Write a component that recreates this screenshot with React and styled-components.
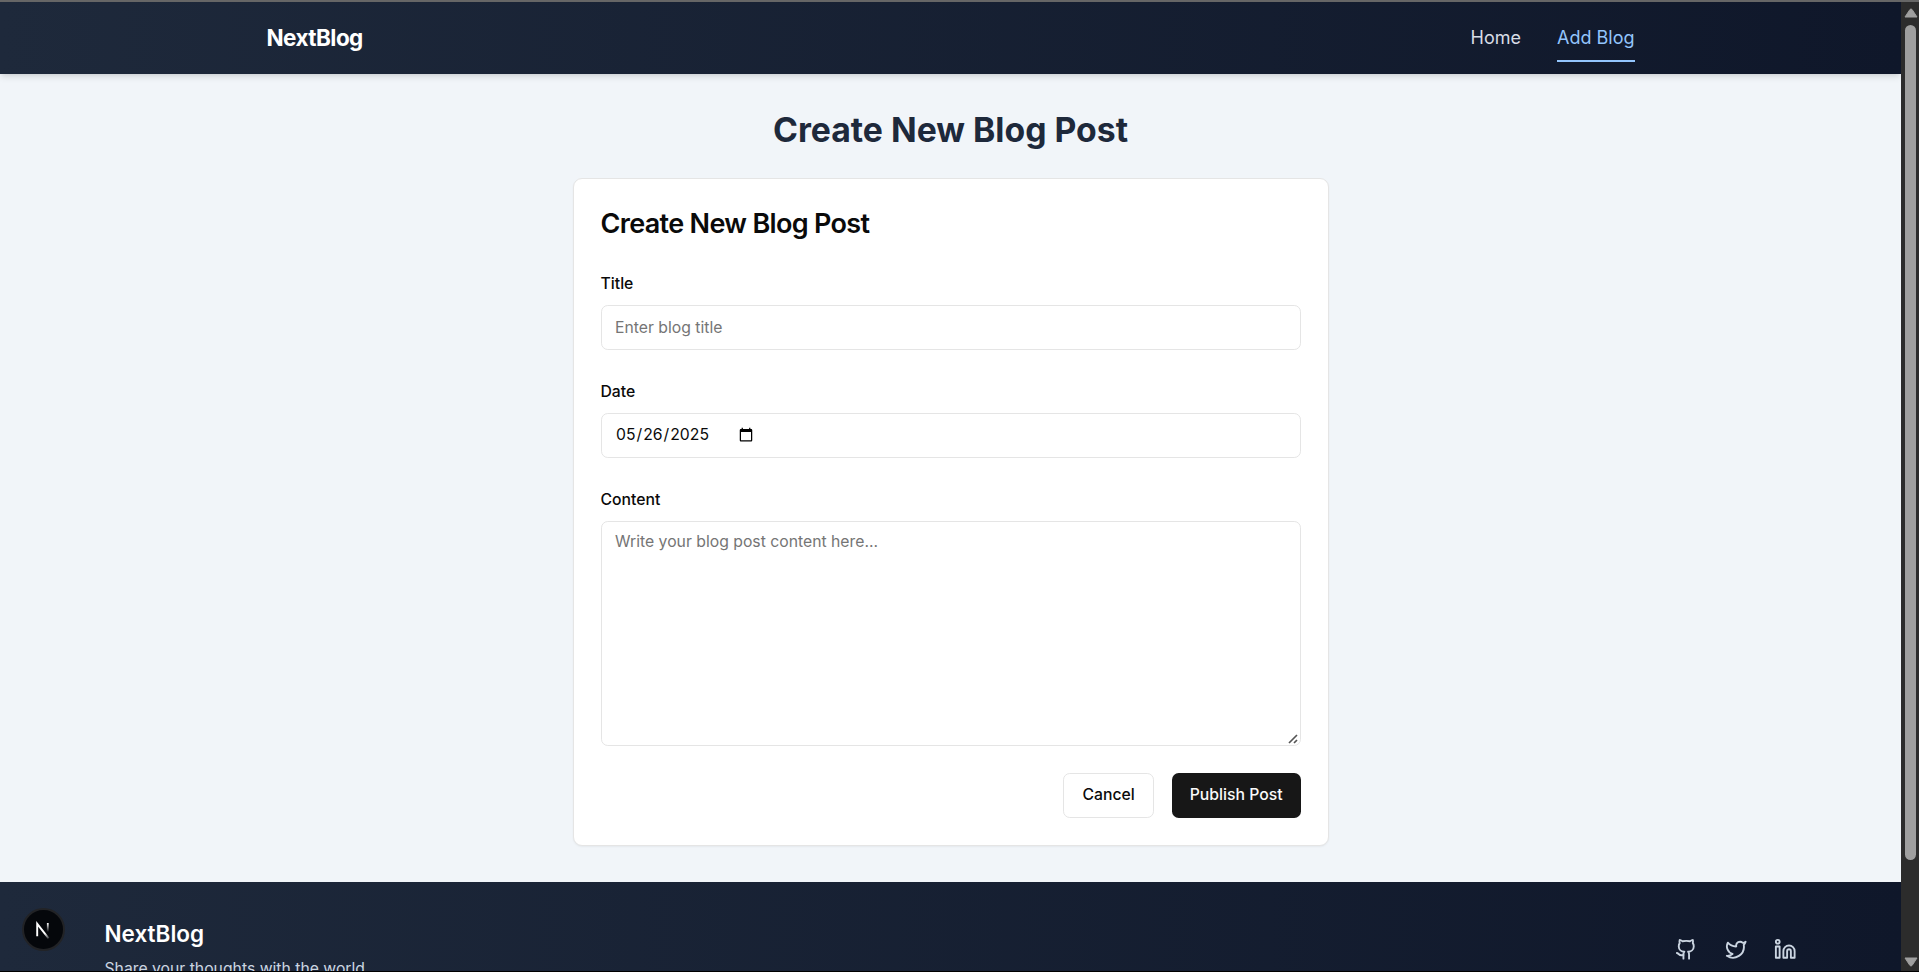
import React from "react";
import styled, { createGlobalStyle } from "styled-components";
import { Github, Twitter, Linkedin } from "lucide-react";

const GlobalStyle = createGlobalStyle`
  *, *::before, *::after { box-sizing: border-box; }
  body {
    margin: 0;
    overflow: hidden;
    font-family: Inter, "Liberation Sans", sans-serif;
    font-size: 18px;
    line-height: 27px;
    color: #0a0a0a;
  }
  h1, h2, p { margin: 0; }
`;

const Window = styled.div`
  display: flex;
  height: 972px;
  border-top: 2px solid #666;
  border-bottom: 1px solid #000;
  overflow: hidden;
`;

const Page = styled.div`
  position: relative;
  flex: 1;
  min-width: 0;
  overflow: hidden;
  background: #f1f5f9;
`;

const Header = styled.header`
  position: relative;
  height: 72px;
  background: linear-gradient(to right, #1e293b, #0f172a);
  box-shadow: 0 4.5px 6.75px -1px rgba(0, 0, 0, 0.1), 0 2.25px 4.5px -2px rgba(0, 0, 0, 0.1);
`;

const HeaderInner = styled.div`
  display: flex;
  align-items: center;
  justify-content: space-between;
  width: 1368px;
  height: 100%;
  margin: 0 auto;
`;

const Brand = styled.span`
  display: block;
  font-size: 22.5px;
  line-height: 31.5px;
  font-weight: ${(p) => (p.$tight ? 700 : 600)};
  letter-spacing: ${(p) => (p.$tight ? "-0.025em" : "normal")};
  color: #fff;
`;

const Nav = styled.nav`
  display: flex;
  gap: 36px;
`;

const NavLink = styled.a`
  padding: 9px 0;
  border-bottom: 2px solid ${(p) => (p.$active ? "#93c5fd" : "transparent")};
  color: ${(p) => (p.$active ? "#93c5fd" : "#d8dde6")};
`;

const Main = styled.main`
  display: flex;
  flex-direction: column;
  align-items: center;
  padding: 36px 0;
`;

const PageTitle = styled.h1`
  margin-bottom: 27px;
  font-size: 33.75px;
  line-height: 40.5px;
  font-weight: 700;
  color: #1e293b;
`;

const Card = styled.form`
  display: flex;
  flex-direction: column;
  gap: 27px;
  width: 756px;
  padding: 27px;
  border: 1px solid #e5e5e5;
  border-radius: 9px;
  background: #fff;
  box-shadow: 0 1px 2px rgba(0, 0, 0, 0.05);
`;

const CardTitle = styled.h2`
  font-size: 27px;
  line-height: 36px;
  font-weight: 600;
  letter-spacing: -0.025em;
`;

const Field = styled.div`
  display: flex;
  flex-direction: column;
  gap: 9px;
`;

const LabelRow = styled.div`
  height: 27px;
`;

const Label = styled.label`
  font-size: 15.75px;
  line-height: 15.75px;
  font-weight: 500;
`;

const Input = styled.input`
  display: flex;
  width: 100%;
  height: 45px;
  padding: 9px 13.5px;
  border: 1px solid #e5e5e5;
  border-radius: 6.75px;
  background: #fff;
  font: 400 15.75px/22.5px Inter, "Liberation Sans", sans-serif;
  color: #0a0a0a;
  outline: none;
  &::placeholder { color: #757575; }
`;

const TextAreaBox = styled.div`
  position: relative;
`;

const TextArea = styled.textarea`
  display: flex;
  width: 100%;
  height: 225px;
  padding: 9px 13.5px;
  border: 1px solid #e5e5e5;
  border-radius: 6.75px;
  background: #fff;
  font: 400 15.75px/22.5px Inter, "Liberation Sans", sans-serif;
  color: #0a0a0a;
  resize: none;
  outline: none;
  &::placeholder { color: #757575; }
`;

const ResizeGrip = styled.svg`
  position: absolute;
  right: 2px;
  bottom: 1px;
  pointer-events: none;
`;

const Actions = styled.div`
  display: flex;
  justify-content: flex-end;
  gap: 18px;
`;

const Button = styled.button`
  height: 45px;
  padding: 0 18px;
  border: ${(p) => (p.$primary ? "0" : "1px solid #e5e5e5")};
  border-radius: 6.75px;
  background: ${(p) => (p.$primary ? "#171717" : "#fff")};
  color: ${(p) => (p.$primary ? "#fafafa" : "#0a0a0a")};
  font: 500 15.75px/22.5px Inter, "Liberation Sans", sans-serif;
`;

const Footer = styled.footer`
  height: 135px;
  padding-top: 36px;
  background: linear-gradient(to right, #1e293b, #0f172a);
`;

const FooterInner = styled.div`
  display: flex;
  align-items: center;
  justify-content: space-between;
  width: 1692px;
  margin: 0 auto;
`;

const Tagline = styled.p`
  margin-top: 9px;
  font-size: 15.75px;
  line-height: 22.5px;
  color: #cbd5e1;
`;

const Social = styled.div`
  display: flex;
  gap: 27px;
  color: #cbd5e1;
`;

const DevBadge = styled.div`
  position: absolute;
  left: 22px;
  bottom: 20px;
  display: flex;
  align-items: center;
  justify-content: center;
  width: 43px;
  height: 43px;
  border: 2px solid #222326;
  border-radius: 50%;
  background: #05070b;
`;

const ScrollTrack = styled.div`
  display: flex;
  flex-direction: column;
  align-items: center;
  justify-content: space-between;
  width: 18px;
  padding: 6px 0 4px;
  background: #2c2c2c;
`;

const ScrollThumb = styled.div`
  width: 11px;
  height: 835px;
  margin: 7px 0 auto 1px;
  border-radius: 6px;
  background: #9f9f9f;
`;

const ArrowIcon = styled.svg`
  display: block;
  margin-left: 1px;
`;

const Arrow = ({ down }) => (
  <ArrowIcon width="14" height="10" viewBox="0 0 14 10">
    <path
      d={down ? "M1 1h12L8.2 8.3q-1.2 1.6-2.4 0z" : "M1 9h12L8.2 1.7q-1.2-1.6-2.4 0z"}
      fill="#9f9f9f"
      stroke="#9f9f9f"
      strokeLinejoin="round"
    />
  </ArrowIcon>
);

const NextMark = () => (
  <svg width="17" height="18" viewBox="0 0 17 18" fill="none">
    <defs>
      <linearGradient id="diag" x1="8" y1="10" x2="14" y2="18" gradientUnits="userSpaceOnUse">
        <stop offset="0.3" stopColor="#fff" />
        <stop offset="1" stopColor="#fff" stopOpacity="0.1" />
      </linearGradient>
      <linearGradient id="stem" x1="13" y1="2" x2="13" y2="11" gradientUnits="userSpaceOnUse">
        <stop stopColor="#fff" />
        <stop offset="1" stopColor="#fff" stopOpacity="0" />
      </linearGradient>
    </defs>
    <path d="M2.2 15.2V2.8L13.6 17.4" stroke="url(#diag)" strokeWidth="1.9" />
    <path d="M12.8 2v10" stroke="url(#stem)" strokeWidth="1.8" />
  </svg>
);

export default function App() {
  return (
    <>
      <GlobalStyle />
      <Window>
        <Page>
          <Header>
            <HeaderInner>
              <Brand $tight>NextBlog</Brand>
              <Nav>
                <NavLink>Home</NavLink>
                <NavLink $active>Add Blog</NavLink>
              </Nav>
            </HeaderInner>
          </Header>
          <Main>
            <PageTitle>Create New Blog Post</PageTitle>
            <Card>
              <CardTitle>Create New Blog Post</CardTitle>
              <Field>
                <LabelRow><Label htmlFor="title">Title</Label></LabelRow>
                <Input id="title" placeholder="Enter blog title" />
              </Field>
              <Field>
                <LabelRow><Label htmlFor="date">Date</Label></LabelRow>
                <Input id="date" type="date" defaultValue="2025-05-26" />
              </Field>
              <Field>
                <LabelRow><Label htmlFor="content">Content</Label></LabelRow>
                <TextAreaBox>
                  <TextArea id="content" placeholder="Write your blog post content here..." />
                  <ResizeGrip width="12" height="12" viewBox="0 0 12 12">
                    <path d="M2 10l8-8M7 10l3-3" stroke="#555" strokeWidth="1.7" />
                  </ResizeGrip>
                </TextAreaBox>
              </Field>
              <Actions>
                <Button type="button">Cancel</Button>
                <Button type="button" $primary>Publish Post</Button>
              </Actions>
            </Card>
          </Main>
          <Footer>
            <FooterInner>
              <div>
                <Brand>NextBlog</Brand>
                <Tagline>Share your thoughts with the world</Tagline>
              </div>
              <Social>
                <Github size={22.5} />
                <Twitter size={22.5} />
                <Linkedin size={22.5} />
              </Social>
            </FooterInner>
          </Footer>
          <DevBadge><NextMark /></DevBadge>
        </Page>
        <ScrollTrack>
          <Arrow />
          <ScrollThumb />
          <Arrow down />
        </ScrollTrack>
      </Window>
    </>
  );
}
